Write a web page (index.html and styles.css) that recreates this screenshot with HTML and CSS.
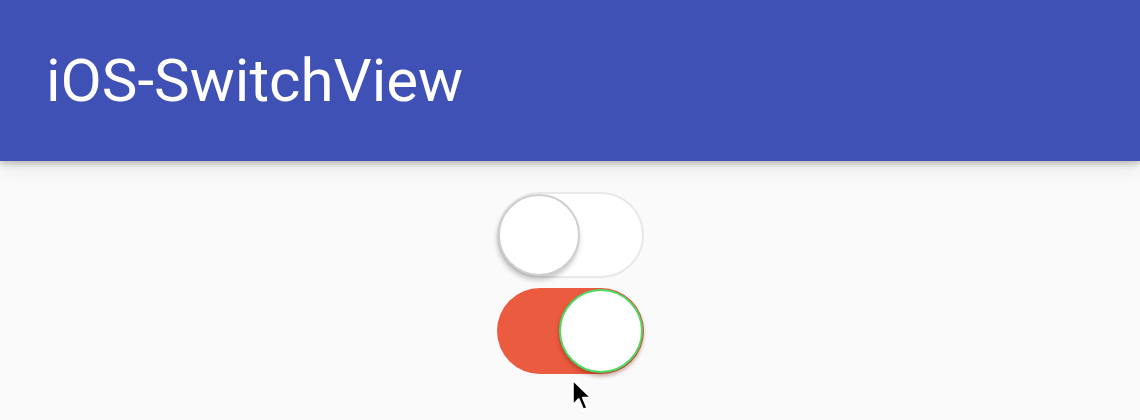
FILE: index.html
```html
<!DOCTYPE html>
<html>
<head>
<meta charset="utf-8">
<link rel="stylesheet" href="styles.css">
</head>
<body>
<header class="appbar">
  <h1 class="title">iOS-SwitchView</h1>
</header>
<main class="content">
  <div class="switch off">
    <div class="knob"></div>
  </div>
  <div class="switch on">
    <div class="knob"></div>
  </div>
</main>
<svg class="cursor" width="22" height="34" viewBox="0 0 20 31">
  <path d="M1.5 1.5 L1.5 25 L7 19.5 L11 29 L15 27.3 L11 18 L18.5 18 Z" fill="#000" stroke="#fff" stroke-width="2" stroke-linejoin="round"/>
</svg>
</body>
</html>
```

FILE: styles.css
```css
html, body {
  margin: 0;
  padding: 0;
}
body {
  width: 1140px;
  height: 420px;
  overflow: hidden;
  background: #fafafa;
  font-family: Roboto, "Liberation Sans", sans-serif;
  position: relative;
}
.appbar {
  height: 161px;
  background: #3f51b5;
  display: flex;
  align-items: center;
  padding-left: 46px;
  box-shadow: 0 3px 6px rgba(0,0,0,0.22), 0 10px 20px rgba(0,0,0,0.06);
  position: relative;
  z-index: 1;
}
.title {
  margin: 0;
  color: #fff;
  font-weight: 400;
  font-size: 60px;
  line-height: 1;
  padding-bottom: 0;
}
.content {
  display: flex;
  flex-direction: column;
  align-items: center;
  gap: 10px;
  padding-top: 31px;
}
.switch {
  width: 147px;
  height: 86px;
  border-radius: 43px;
  box-sizing: border-box;
  display: flex;
  align-items: center;
}
.switch.off {
  background: #fff;
  border: 2px solid #e8e8e8;
  justify-content: flex-start;
}
.switch.off .knob {
  width: 82px;
  height: 82px;
  margin-left: -1px;
  border: 2px solid #cfcfcf;
  background: #fff;
  box-shadow: -1px 4px 5px rgba(0,0,0,0.22);
}
.switch.on {
  background: #ea5b40;
  justify-content: flex-end;
}
.switch.on .knob {
  width: 84px;
  height: 84px;
  margin-right: 1px;
  border: 2px solid #4cd964;
  background: #fff;
  box-shadow: 0 3px 4px rgba(120,30,10,0.45);
}
.knob {
  border-radius: 50%;
  box-sizing: border-box;
}
.cursor {
  position: absolute;
  left: 571px;
  top: 378px;
}
```
